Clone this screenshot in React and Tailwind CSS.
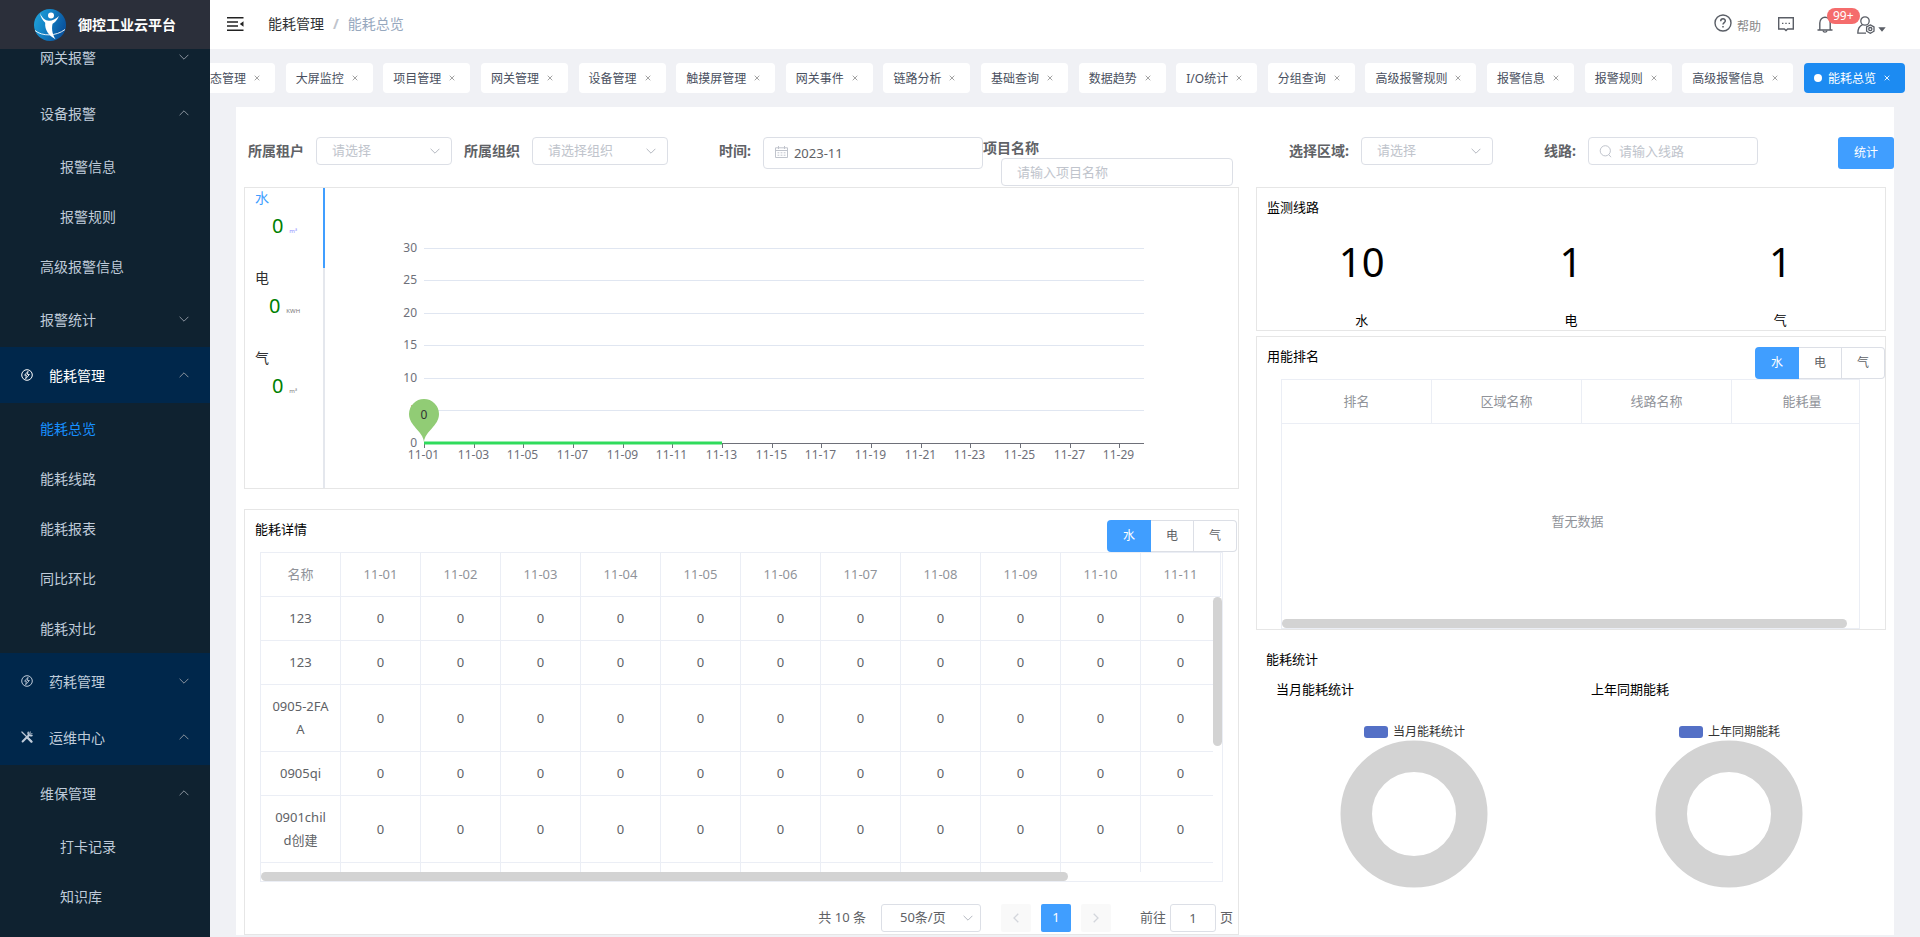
import React from "react";

const FONT = "font-['Noto_Sans','Noto_Sans_CJK_SC',sans-serif]";

function Chevron({ dir = "down", className = "" }) {
  return (
    <svg viewBox="0 0 10 6" fill="none" stroke="currentColor" strokeWidth="1" className={className} aria-hidden="true">
      <path d={dir === "down" ? "M0.6 0.8 L5 5.2 L9.4 0.8" : "M0.6 5.2 L5 0.8 L9.4 5.2"} />
    </svg>
  );
}

function EnergyIcon() {
  return (
    <svg viewBox="0 0 12 12" className="h-3 w-3" fill="none" stroke="currentColor" aria-hidden="true">
      <circle cx="6" cy="6" r="5.3" strokeWidth="1" />
      <path d="M7 2.3 L3.6 6.2 H5.4 L4.7 9.7 L8.4 5.5 H6.4 Z" strokeWidth="0.9" />
    </svg>
  );
}

function ToolsIcon() {
  return (
    <svg viewBox="0 0 12 12" className="h-3 w-3" fill="none" stroke="currentColor" strokeLinecap="round" aria-hidden="true">
      <path d="M0.9 1 L10.8 10.8" strokeWidth="1.2" />
      <path d="M6.6 6.8 L10.4 10.6" strokeWidth="2.2" />
      <path d="M1.6 10.5 L7.6 4.5" strokeWidth="2" />
      <path d="M7.2 1.2 C6.4 3.2 8.6 5.6 11 4.6" strokeWidth="1.5" />
      <path d="M9.2 0.9 L8.6 3.4 L11 2.8" strokeWidth="1" />
    </svg>
  );
}

const menu = [
  { label: "网关报警", kind: "sub", arrow: "down" },
  { label: "设备报警", kind: "sub", arrow: "up" },
  { label: "报警信息", kind: "leaf" },
  { label: "报警规则", kind: "leaf" },
  { label: "高级报警信息", kind: "item" },
  { label: "报警统计", kind: "sub", arrow: "down" },
  { label: "能耗管理", kind: "section", arrow: "up", icon: "energy", open: true },
  { label: "能耗总览", kind: "item", active: true },
  { label: "能耗线路", kind: "item" },
  { label: "能耗报表", kind: "item" },
  { label: "同比环比", kind: "item" },
  { label: "能耗对比", kind: "item" },
  { label: "药耗管理", kind: "section", arrow: "down", icon: "energy" },
  { label: "运维中心", kind: "section", arrow: "up", icon: "tools" },
  { label: "维保管理", kind: "sub", arrow: "up" },
  { label: "打卡记录", kind: "leaf" },
  { label: "知识库", kind: "leaf" },
];

const kindClass = {
  sub: "h-14 pl-10",
  item: "h-[50px] pl-10",
  leaf: "h-[50px] pl-15",
  section: "h-14 bg-[#00274b] pl-[21px]",
};

function Sidebar() {
  return (
    <aside className="flex w-[210px] shrink-0 flex-col overflow-hidden bg-[#0f2230]">
      <div className="z-10 flex h-[49px] shrink-0 items-center gap-3 bg-[#2b2f3a] pl-[34px]">
        <svg viewBox="0 0 32 32" className="h-8 w-8" aria-hidden="true">
          <defs>
            <linearGradient id="globe" x1="0" y1="0" x2="1" y2="0.4">
              <stop offset="0" stopColor="#22a7dc" />
              <stop offset="0.45" stopColor="#1486c8" />
              <stop offset="1" stopColor="#0a55a0" />
            </linearGradient>
          </defs>
          <circle cx="16" cy="16" r="16" fill="url(#globe)" />
          <circle cx="17" cy="6.5" r="3" fill="#fff" />
          <path d="M6 4 C8 9 11 11.6 15 11.8 C18 11.8 22 10 25 7 C23 11.5 20.5 13.6 18.6 14.8 C17.6 19 17.8 24 21.5 30.2 C15 27 10.5 21 11.2 13.8 C8.6 11.5 6.6 8 6 4 Z" fill="#fff" />
          <path d="M1 21.5 C8 27.5 22 27.5 31 20.5" fill="none" stroke="#fff" strokeWidth="0.9" />
        </svg>
        <h1 className="text-sm font-bold text-white">御控工业云平台</h1>
      </div>
      <nav className="-mt-5 flex flex-col text-sm text-[#bfcbd9]">
        {menu.map((m, i) => (
          <a
            key={i}
            href="#"
            className={`flex items-center justify-between pr-[21px] ${kindClass[m.kind]} ${m.active ? "text-[#1890ff]" : ""} ${m.open ? "text-white" : ""}`}
          >
            <span className="flex items-center gap-4">
              {m.icon === "energy" && <EnergyIcon />}
              {m.icon === "tools" && <ToolsIcon />}
              <span className="pt-[2px]">{m.label}</span>
            </span>
            {m.arrow && <Chevron dir={m.arrow} className="h-[6px] w-[10px] text-[#8a939e]" />}
          </a>
        ))}
      </nav>
    </aside>
  );
}

function Header() {
  return (
    <header className="flex h-[49px] items-center justify-between bg-white pr-[34px] pl-[17px]">
      <div className="flex items-center gap-6">
        <button type="button" aria-label="收起菜单" className="pb-[2px]">
          <svg viewBox="0 0 17 14" className="h-[14px] w-[17px]" fill="none" stroke="#222" strokeWidth="1.5" aria-hidden="true">
            <path d="M0 0.8 H16.5 M0 5 H11 M0 9 H11 M0 13.2 H16.5" />
            <path d="M16.5 4.3 V9.7 L12.8 7 Z" fill="#222" stroke="none" />
          </svg>
        </button>
        <nav className="flex items-center gap-[9px] pb-[2px] text-sm leading-5">
          <a href="#" className="text-[#303133]">能耗管理</a>
          <span className="font-bold text-[#c0c4cc]">/</span>
          <span className="text-[#97a8be]">能耗总览</span>
        </nav>
      </div>
      <div className="flex items-center text-[#5a5e66]">
        <a href="#" className="flex items-center gap-[5px]">
          <svg viewBox="0 0 18 18" className="mb-1 h-[18px] w-[18px]" fill="none" stroke="currentColor" aria-hidden="true">
            <circle cx="9" cy="9" r="8" strokeWidth="1.4" />
            <path d="M6.7 7.2 C6.7 4 11.4 4.1 11.3 7 C11.2 8.6 9 8.6 9 10.6" strokeWidth="1.5" />
            <path d="M9 12 V13.6" strokeWidth="1.5" />
          </svg>
          <span className="mt-1 text-xs text-[#888]">帮助</span>
        </a>
        <button type="button" aria-label="消息" className="ml-[17px]">
          <svg viewBox="0 0 16 15" className="h-[15px] w-4" fill="none" stroke="currentColor" strokeWidth="1.4" aria-hidden="true">
            <path d="M0.7 0.7 H15.3 V12 H9.6 L8 13.6 L6.4 12 H0.7 Z" />
            <path d="M4 6.3 H5.4 M7.3 6.3 H8.7 M10.6 6.3 H12" strokeWidth="1.2" />
          </svg>
        </button>
        <button type="button" aria-label="通知" className="relative ml-[23px]">
          <svg viewBox="0 0 16 17" className="h-[17px] w-4" fill="none" stroke="currentColor" strokeWidth="1.4" aria-hidden="true">
            <path d="M2.8 13.8 V7 C2.8 -0.6 13.2 -0.6 13.2 7 V13.8 M0.5 14 H15.5" />
            <path d="M6 14.6 C6.4 16.6 9.6 16.6 10 14.6" />
          </svg>
          <span className="absolute -top-2 left-[10px] flex h-4 items-center rounded-full bg-[#f56c6c] px-[6px] text-xs text-white">99+</span>
        </button>
        <button type="button" aria-label="用户" className="ml-6 flex items-end gap-[3px]">
          <svg viewBox="0 0 18 18" className="h-[18px] w-[18px]" fill="none" stroke="currentColor" strokeWidth="1.3" aria-hidden="true">
            <circle cx="8" cy="5" r="4.2" />
            <path d="M5.6 8.6 C2.2 10 0.8 13 0.8 17.2 H9" />
            <path d="M13.3 8.9 L17 11 V15.2 L13.3 17.3 L9.6 15.2 V11 Z" />
            <circle cx="13.3" cy="13.1" r="1.6" />
          </svg>
          <svg viewBox="0 0 8 5" className="mb-[2px] h-[5px] w-2" fill="currentColor" aria-hidden="true">
            <path d="M0.3 0.3 H7.7 L4 4.8 Z" />
          </svg>
        </button>
      </div>
    </header>
  );
}

const tabs = ["组态管理", "大屏监控", "项目管理", "网关管理", "设备管理", "触摸屏管理", "网关事件", "链路分析", "基础查询", "数据趋势", "I/O统计", "分组查询", "高级报警规则", "报警信息", "报警规则", "高级报警信息", "能耗总览"];

function TabStrip() {
  return (
    <div className="overflow-hidden py-[14px]">
      <div className="-ml-[22px] flex justify-between pr-[15px]">
        {tabs.map((t, i) => {
          const active = i === tabs.length - 1;
          return (
            <div
              key={t}
              className={`flex h-[30px] shrink-0 items-center rounded px-[10px] text-xs ${active ? "bg-[#1c8bf2] text-white" : "bg-white text-[#495060]"}`}
            >
              {active && <span className="mr-[6px] h-2 w-2 rounded-full bg-white" />}
              <a href="#" className="pt-[2px]">{t}</a>
              <button type="button" aria-label={`关闭${t}`} className="ml-[3px] flex h-4 w-4 items-center justify-center">
                <svg viewBox="0 0 6 6" className={`h-[6px] w-[6px] ${active ? "text-white" : "text-[#999]"}`} stroke="currentColor" strokeWidth="0.9" aria-hidden="true">
                  <path d="M0.7 0.7 L5.3 5.3 M5.3 0.7 L0.7 5.3" />
                </svg>
              </button>
            </div>
          );
        })}
      </div>
    </div>
  );
}

function PlaceholderSelect({ id, text }) {
  return (
    <div className="relative min-w-0 flex-1">
      <select id={id} defaultValue="" className="h-7 w-full appearance-none rounded border border-[#dcdfe6] bg-white pl-[15px] text-[13px] text-[#c0c4cc]">
        <option value="">{text}</option>
      </select>
      <Chevron className="pointer-events-none absolute top-[11px] right-3 h-[6px] w-[10px] text-[#b4b8c0]" />
    </div>
  );
}

const label = "shrink-0 text-sm leading-7 font-bold text-[#606266]";

function Filters() {
  return (
    <form className="grid h-[50px] grid-cols-[216fr_255fr_264fr_306fr_255fr_294fr_56px] items-start pl-1">
      <div className="flex gap-3 pr-3">
        <label htmlFor="tenant" className={label}>所属租户</label>
        <PlaceholderSelect id="tenant" text="请选择" />
      </div>
      <div className="flex gap-3 pr-[51px]">
        <label htmlFor="org" className={label}>所属组织</label>
        <PlaceholderSelect id="org" text="请选择组织" />
      </div>
      <div className="flex gap-3">
        <label htmlFor="month" className={label}>时间:</label>
        <div className="relative min-w-0 flex-1">
          <svg viewBox="0 0 13 12" className="absolute top-[9px] left-3 h-3 w-[13px]" fill="none" stroke="#c0c4cc" aria-hidden="true">
            <path d="M0.5 1.8 H12.5 V11.5 H0.5 Z M0.5 4.5 H12.5 M3.5 0 V3 M9.5 0 V3" />
            <path d="M2.5 6.8 H4.3 M5.6 6.8 H7.4 M8.7 6.8 H10.5 M2.5 9.2 H4.3 M5.6 9.2 H7.4 M8.7 9.2 H10.5" />
          </svg>
          <input id="month" type="text" defaultValue="2023-11" className="h-8 w-full rounded border border-[#dcdfe6] pl-[30px] text-[13px] text-[#606266]" />
        </div>
      </div>
      <div className="flex flex-col pr-14">
        <label htmlFor="project" className="h-[21px] text-sm leading-[21px] font-bold text-[#606266]">项目名称</label>
        <input id="project" type="text" placeholder="请输入项目名称" className="ml-[18px] h-7 rounded border border-[#dcdfe6] px-[15px] text-[13px] placeholder:text-[#c0c4cc]" />
      </div>
      <div className="flex gap-3 pr-[51px]">
        <label htmlFor="area" className={label}>选择区域:</label>
        <PlaceholderSelect id="area" text="请选择" />
      </div>
      <div className="flex gap-3 pr-20">
        <label htmlFor="line" className={label}>线路:</label>
        <div className="relative min-w-0 flex-1">
          <svg viewBox="0 0 13 13" className="absolute top-[8px] left-[11px] h-[13px] w-[13px]" fill="none" stroke="#c0c4cc" aria-hidden="true">
            <circle cx="6.3" cy="5.8" r="5.1" />
            <path d="M9.8 9.6 L12 12.2" />
          </svg>
          <input id="line" type="text" placeholder="请输入线路" className="h-7 w-full rounded border border-[#dcdfe6] pr-2 pl-[30px] text-[13px] placeholder:text-[#c0c4cc]" />
        </div>
      </div>
      <button type="button" className="h-8 rounded-[3px] bg-[#409eff] text-xs text-white">统计</button>
    </form>
  );
}

function TypeSwitch() {
  return (
    <div className="flex h-8 text-xs text-[#606266]">
      <button type="button" className="w-11 rounded-l bg-[#409eff] text-white">水</button>
      <button type="button" className="w-[43px] border-y border-r border-[#dcdfe6] bg-white">电</button>
      <button type="button" className="w-[43px] rounded-r border-y border-r border-[#dcdfe6] bg-white">气</button>
    </div>
  );
}

const meters = [
  { name: "水", unit: "m³", on: true },
  { name: "电", unit: "KWH" },
  { name: "气", unit: "m³" },
];

const yTicks = [30, 25, 20, 15, 10, 5, 0];

function TrendChart() {
  const left = 99;
  const right = 819;
  const y = (v) => 255.5 - Math.round((v * 195) / 30);
  const days = Array.from({ length: 15 }, (_, i) => i * 2 + 1);
  return (
    <svg viewBox="0 0 913 300" className="min-w-0 flex-1" fontSize="12" role="img" aria-label="用水趋势">
      {yTicks.slice(0, 6).map((v) => (
        <line key={v} x1={left} x2={right} y1={y(v)} y2={y(v)} stroke="#E0E6F1" />
      ))}
      {yTicks.map((v) => (
        <text key={v} x={left - 7} y={y(v) + 3} textAnchor="end" fill="#6E7079">{v}</text>
      ))}
      <line x1={left} x2={right} y1="255.5" y2="255.5" stroke="#6E7079" />
      {days.map((d) => {
        const x = Math.round(left + ((d - 1) * (right - left)) / 29) + 0.5;
        return (
          <g key={d}>
            <line x1={x} x2={x} y1="255" y2="260" stroke="#6E7079" />
            <text x={x - 1} y="271" textAnchor="middle" fill="#6E7079">{`11-${String(d).padStart(2, "0")}`}</text>
          </g>
        );
      })}
      <line x1={left} x2="397" y1="255" y2="255" stroke="#30db5c" strokeWidth="3" />
      <path d="M99 254 C98 243 84 238 84 226 A15 15 0 0 1 114 226 C114 238 100 243 99 254 Z" fill="#91cc75" />
      <text x="99" y="231" textAnchor="middle" fill="#333">0</text>
    </svg>
  );
}

function TrendPanel() {
  return (
    <section className="flex h-[302px] border border-[#e6e6e6]">
      <div className="flex w-20 flex-col border-r-2 border-[#e4e7ed]">
        {meters.map((m) => (
          <button key={m.name} type="button" className={`-mr-[2px] flex h-20 flex-col items-stretch pl-[10px] text-left ${m.on ? "border-r-2 border-[#409eff] text-[#409eff]" : "border-r-2 border-[#e4e7ed] text-[#303133]"}`}>
            <span className="text-sm leading-5">{m.name}</span>
            <span className="-ml-[10px] flex h-9 items-baseline justify-center gap-[6px] pl-px">
              <span className="text-xl leading-9 text-[#008000]">0</span>
              <span className={`text-[6px] ${m.on ? "text-[#8a8aff]" : "text-[#777]"}`}>{m.unit}</span>
            </span>
          </button>
        ))}
      </div>
      <TrendChart />
    </section>
  );
}

const dates = ["11-01", "11-02", "11-03", "11-04", "11-05", "11-06", "11-07", "11-08", "11-09", "11-10", "11-11"];
const lines = ["123", "123", "0905-2FAA", "0905qi", "0901child创建"];
const cell = "border-r border-b border-[#ebeef5] px-[11px] py-[10px] text-center text-[13px] leading-[23px] font-normal";

function DetailTable() {
  return (
    <div className="relative mx-[15px] h-[330px] overflow-hidden border border-[#ebeef5]">
      <table className="w-[960px] table-fixed border-separate border-spacing-0">
        <thead>
          <tr className="text-[#909399]">
            <th className={cell}>名称</th>
            {dates.map((d) => (
              <th key={d} className={cell}>{d}</th>
            ))}
          </tr>
        </thead>
        <tbody>
          {lines.map((n, i) => (
            <tr key={i} className="text-[#606266]">
              <td className={`${cell} break-all`}>{n}</td>
              {dates.map((d) => (
                <td key={d} className={cell}>0</td>
              ))}
            </tr>
          ))}
          <tr aria-hidden="true">
            <td className={cell}>&nbsp;</td>
            {dates.map((d) => (
              <td key={d} className={cell} />
            ))}
          </tr>
        </tbody>
      </table>
      <div className="absolute top-11 right-0 bottom-0 w-[9px] bg-white">
        <div className="h-[149px] rounded-full bg-[#d3d3d3]" />
      </div>
      <div className="absolute inset-x-0 bottom-0 h-[9px] bg-white">
        <div className="h-full w-[84%] rounded-full bg-[#d3d3d3]" />
      </div>
    </div>
  );
}

function Pagination() {
  return (
    <div className="mt-[22px] flex h-7 items-center justify-end pr-[5px] text-[13px] text-[#606266]">
      <span>共 10 条</span>
      <div className="relative ml-[15px]">
        <select aria-label="每页条数" className="h-7 w-[100px] appearance-none rounded-[3px] border border-[#dcdfe6] bg-white pl-[18px] text-[13px]">
          <option>50条/页</option>
        </select>
        <Chevron className="pointer-events-none absolute top-[11px] right-2 h-[6px] w-[10px] text-[#b4b8c0]" />
      </div>
      <button type="button" aria-label="上一页" className="ml-5 flex h-7 w-[30px] items-center justify-center rounded-[2px] bg-[#f9f9f9]">
        <svg viewBox="0 0 6 10" className="h-[10px] w-[6px]" fill="none" stroke="#d3d6dc" strokeWidth="1.3" aria-hidden="true"><path d="M5.3 0.7 L1 5 L5.3 9.3" /></svg>
      </button>
      <button type="button" className="ml-[10px] h-7 w-[30px] rounded-[2px] bg-[#409eff] text-white">1</button>
      <button type="button" aria-label="下一页" className="ml-[10px] flex h-7 w-[30px] items-center justify-center rounded-[2px] bg-[#f9f9f9]">
        <svg viewBox="0 0 6 10" className="h-[10px] w-[6px]" fill="none" stroke="#d3d6dc" strokeWidth="1.3" aria-hidden="true"><path d="M0.7 0.7 L5 5 L0.7 9.3" /></svg>
      </button>
      <label htmlFor="page" className="ml-[29px]">前往</label>
      <input id="page" type="text" defaultValue="1" className="mx-1 h-7 w-[46px] rounded-[3px] border border-[#dcdfe6] text-center" />
      <span>页</span>
    </div>
  );
}

const panelTitle = "pl-[10px] text-[13px] leading-[18px] text-black";

function DetailPanel() {
  return (
    <section className="h-[426px] border border-[#e6e6e6]">
      <div className="flex items-start justify-between pt-[10px] pr-px">
        <h2 className={panelTitle}>能耗详情</h2>
        <TypeSwitch />
      </div>
      <DetailTable />
      <Pagination />
    </section>
  );
}

const counts = [["10", "水"], ["1", "电"], ["1", "气"]];

function LinesPanel() {
  return (
    <section className="flex h-36 flex-col border border-[#e6e6e6] pt-[10px]">
      <h2 className={panelTitle}>监测线路</h2>
      <div className="grid grid-cols-3 pt-[2px] text-center text-black">
        {counts.map(([n, t]) => (
          <div key={t} className="flex flex-col">
            <span className="h-[92px] text-[40px] leading-[88px]">{n}</span>
            <span className="text-[13px] leading-5">{t}</span>
          </div>
        ))}
      </div>
    </section>
  );
}

function RankPanel() {
  return (
    <section className="mt-[5px] h-[294px] border border-[#e6e6e6]">
      <div className="flex items-start justify-between pt-[10px]">
        <h2 className={panelTitle}>用能排名</h2>
        <TypeSwitch />
      </div>
      <div className="relative mr-[25px] ml-6 flex h-[250px] flex-col overflow-hidden border border-[#ebeef5]">
        <table className="w-[591px] table-fixed border-separate border-spacing-0">
          <thead>
            <tr className="text-[#909399]">
              <th className={`${cell} w-[150px]`}>排名</th>
              <th className={`${cell} w-[150px]`}>区域名称</th>
              <th className={`${cell} w-[150px]`}>线路名称</th>
              <th className={cell}>能耗量</th>
            </tr>
          </thead>
        </table>
        <p className="flex flex-1 items-center justify-center pl-[14px] text-[13px] text-[#909399]">暂无数据</p>
        <div className="h-[9px] w-[98%] rounded-full bg-[#d3d3d3]" />
      </div>
    </section>
  );
}

function Donut({ title }) {
  return (
    <div className="flex flex-col">
      <h3 className="pl-5 text-[13px] leading-[18px] text-black">{title}</h3>
      <div className="mt-6 flex h-5 items-center justify-center gap-[5px] pl-[2px] text-xs text-[#333]">
        <span className="h-3 w-6 rounded-[3px] bg-[#5470c6]" />
        {title}
      </div>
      <svg viewBox="0 0 148 148" className="mx-auto -mt-[2px] h-[148px] w-[148px]" role="img" aria-label={title}>
        <circle cx="74" cy="74" r="57.75" fill="none" stroke="#d3d3d3" strokeWidth="31.5" />
      </svg>
    </div>
  );
}

function StatsPanel() {
  return (
    <section className="mt-5">
      <h2 className={panelTitle}>能耗统计</h2>
      <div className="mt-3 grid grid-cols-2">
        <Donut title="当月能耗统计" />
        <Donut title="上年同期能耗" />
      </div>
    </section>
  );
}

export default function App() {
  return (
    <div className={`flex min-h-screen bg-[#f0f1f5] ${FONT}`}>
      <Sidebar />
      <div className="flex min-w-0 flex-1 flex-col">
        <Header />
        <TabStrip />
        <main className="mx-[26px] mb-[2px] flex-1 bg-white pt-[30px] pl-2">
          <Filters />
          <div className="grid grid-cols-[995fr_630fr] gap-[17px] pr-2">
            <div className="flex min-w-0 flex-col gap-5">
              <TrendPanel />
              <DetailPanel />
            </div>
            <div className="min-w-0">
              <LinesPanel />
              <RankPanel />
              <StatsPanel />
            </div>
          </div>
        </main>
      </div>
    </div>
  );
}
